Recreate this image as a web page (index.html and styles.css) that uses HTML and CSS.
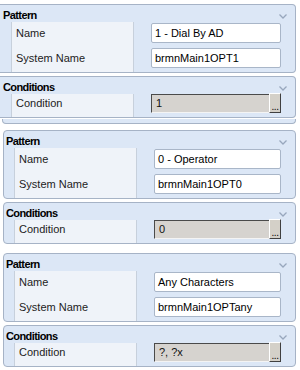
FILE: index.html
```html
<!DOCTYPE html>
<html lang="en">
  <head>
    <meta charset="UTF-8" />
    <title>Patterns</title>
    <link rel="stylesheet" href="styles.css">
  </head>

  <body>
    <div class="group group-first">
      <div class="panel">
        <div class="panel-head">
          <span class="panel-title">Pattern</span>
          <svg class="chevron" width="8" height="5" viewBox="0 0 8 5"><polyline points="0.5,0.5 4,4 7.5,0.5" /></svg>
        </div>
        <div class="row">
          <div class="label">Name</div>
          <div class="value"><div class="textbox">1 - Dial By AD</div></div>
        </div>
        <div class="row">
          <div class="label">System Name</div>
          <div class="value"><div class="textbox">brmnMain1OPT1</div></div>
        </div>
      </div>
      <!--Pattern end-->

      <div class="panel">
        <div class="panel-head">
          <span class="panel-title">Conditions</span>
          <svg class="chevron" width="8" height="5" viewBox="0 0 8 5"><polyline points="0.5,0.5 4,4 7.5,0.5" /></svg>
        </div>
        <div class="row row-cond">
          <div class="label">Condition</div>
          <div class="value">
            <div class="picker"><span class="picker-text">1</span><span class="picker-btn">...</span></div>
          </div>
        </div>
      </div>
      <!--Conditions end-->
    </div>

    <div class="sliver"></div>

    <div class="group group-second">
      <div class="panel">
        <div class="panel-head">
          <span class="panel-title">Pattern</span>
          <svg class="chevron" width="8" height="5" viewBox="0 0 8 5"><polyline points="0.5,0.5 4,4 7.5,0.5" /></svg>
        </div>
        <div class="row">
          <div class="label">Name</div>
          <div class="value"><div class="textbox">0 - Operator</div></div>
        </div>
        <div class="row">
          <div class="label">System Name</div>
          <div class="value"><div class="textbox">brmnMain1OPT0</div></div>
        </div>
      </div>

      <div class="panel">
        <div class="panel-head">
          <span class="panel-title">Conditions</span>
          <svg class="chevron" width="8" height="5" viewBox="0 0 8 5"><polyline points="0.5,0.5 4,4 7.5,0.5" /></svg>
        </div>
        <div class="row row-cond">
          <div class="label">Condition</div>
          <div class="value">
            <div class="picker"><span class="picker-text">0</span><span class="picker-btn">...</span></div>
          </div>
        </div>
      </div>
    </div>

    <div class="group group-third">
      <div class="panel">
        <div class="panel-head">
          <span class="panel-title">Pattern</span>
          <svg class="chevron" width="8" height="5" viewBox="0 0 8 5"><polyline points="0.5,0.5 4,4 7.5,0.5" /></svg>
        </div>
        <div class="row">
          <div class="label">Name</div>
          <div class="value"><div class="textbox">Any Characters</div></div>
        </div>
        <div class="row">
          <div class="label">System Name</div>
          <div class="value"><div class="textbox">brmnMain1OPTany</div></div>
        </div>
      </div>

      <div class="panel">
        <div class="panel-head">
          <span class="panel-title">Conditions</span>
          <svg class="chevron" width="8" height="5" viewBox="0 0 8 5"><polyline points="0.5,0.5 4,4 7.5,0.5" /></svg>
        </div>
        <div class="row row-cond">
          <div class="label">Condition</div>
          <div class="value">
            <div class="picker"><span class="picker-text">?, ?x</span><span class="picker-btn">...</span></div>
          </div>
        </div>
      </div>
    </div>
  </body>
</html>
```

FILE: styles.css
```css
html,
body {
  margin: 0;
  padding: 0;
  background: #fff;
  font-family: "Liberation Sans", Arial, sans-serif;
  font-size: 11px;
  color: #1a1a1a;
}

body {
  padding-top: 4px;
}

.group {
  display: flex;
  flex-direction: column;
  gap: 3px;
  margin: 0 4px 0 3px;
}

.group-first {
  margin: 0 4px 0 0;
}

.group-first .panel {
  border-left: none;
  border-radius: 0 4px 4px 0;
}

.group-second {
  margin-top: 6px;
}

.group-third {
  margin-top: 9px;
}

.panel {
  border: 1px solid #a6b3c6;
  border-radius: 4px;
  background: #dce7f6;
}

.panel-head {
  display: flex;
  justify-content: space-between;
  align-items: flex-start;
  height: 17px;
  padding: 4px 8px 0 2px;
  box-sizing: border-box;
}

.group-first .panel-head {
  padding-left: 3px;
}

.panel-title {
  font-weight: bold;
  line-height: 13px;
  letter-spacing: -0.6px;
  color: #000;
}

.chevron {
  margin-top: 5px;
}

.chevron polyline {
  fill: none;
  stroke: #98a7bd;
  stroke-width: 1.3;
}

.row {
  display: flex;
  height: 25px;
}

.row-cond {
  height: 23px;
}

.label {
  width: 123px;
  margin-left: 10px;
  box-sizing: border-box;
  padding: 1px 0 0 4px;
  line-height: 20px;
  background: #eff3f9;
  border-left: 1px solid #c7d0dc;
  border-right: 1px solid #c7d0dc;
  color: #222;
}

.group-first .label {
  margin-left: 11px;
}

.row-cond .label {
  padding-top: 0;
  line-height: 19px;
}

.value {
  flex: 1;
  padding: 1px 14px 0 17px;
}

.row-cond .value {
  padding-top: 0;
}

.textbox {
  height: 20px;
  box-sizing: border-box;
  border: 1px solid #a9b6c8;
  border-radius: 2px;
  background: #fff;
  padding-left: 3px;
  line-height: 18px;
  color: #000;
}

.picker {
  display: flex;
  height: 19px;
}

.picker-text {
  flex: 1;
  box-sizing: border-box;
  padding-left: 4px;
  line-height: 17px;
  background: #d6d3cf;
  border-top: 1px solid #4a4a4a;
  border-left: 1px solid #4a4a4a;
  border-bottom: 1px solid #f4f4f4;
  color: #111;
}

.picker-btn {
  width: 12px;
  box-sizing: border-box;
  margin-top: -1px;
  height: 20px;
  background: #d4d0c8;
  border-top: 1px solid #fff;
  border-left: 1px solid #fff;
  border-right: 1px solid #404040;
  border-bottom: 1px solid #404040;
  font-size: 10px;
  line-height: 25px;
  text-align: center;
  letter-spacing: -0.5px;
  overflow: hidden;
  color: #000;
}

.sliver {
  height: 5px;
  margin: 1px 4px 0 2px;
  box-sizing: border-box;
  background: #dce7f6;
  border: 1px solid #a6b3c6;
  border-top: none;
  border-radius: 0 0 4px 4px;
}
```
